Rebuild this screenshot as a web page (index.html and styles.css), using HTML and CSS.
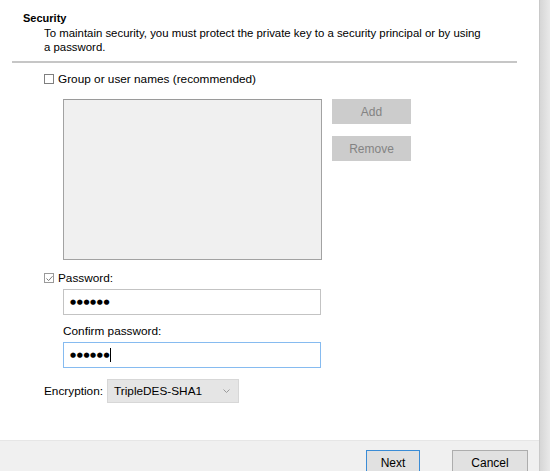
FILE: index.html
```html
<!DOCTYPE html>
<html lang="en">
  <head>
    <meta charset="UTF-8" />
    <title>Certificate Export Wizard - Security</title>
    <link rel="stylesheet" href="styles.css">
  </head>
  <body>
    <div class="page">
      <div class="wizard">
        <div class="header">
          <div class="title">Security</div>
          <div class="desc">To maintain security, you must protect the private key to a security principal or by using a password.</div>
        </div>
        <div class="separator"></div>

        <div class="content">
          <label class="check-row">
            <span class="box"></span>
            <span>Group or user names (recommended)</span>
          </label>

          <div class="principals">
            <div class="listbox"></div>
            <div class="side-buttons">
              <button class="btn disabled">Add</button>
              <button class="btn disabled">Remove</button>
            </div>
          </div>

          <label class="check-row pw-check">
            <span class="box checked">
              <svg width="7" height="7" viewBox="0 0 7 7"><path d="M0.5 3.5 L2.6 5.6 L6.5 1.2" fill="none" stroke="#7a7a7a" stroke-width="1"/></svg>
            </span>
            <span>Password:</span>
          </label>
          <div class="field"><span class="dots">&#9679;&#9679;&#9679;&#9679;&#9679;&#9679;</span></div>

          <div class="field-label">Confirm password:</div>
          <div class="field focused"><span class="dots">&#9679;&#9679;&#9679;&#9679;&#9679;&#9679;</span><span class="caret"></span></div>

          <div class="enc-row">
            <span class="enc-label">Encryption:</span>
            <div class="select">
              <span>TripleDES-SHA1</span>
              <svg width="7" height="4" viewBox="0 0 7 4"><path d="M0.5 0.5 L3.5 3.5 L6.5 0.5" fill="none" stroke="#9a9a9a" stroke-width="1"/></svg>
            </div>
          </div>
        </div>

        <div class="footer">
          <button class="btn next">Next</button>
          <button class="btn cancel">Cancel</button>
        </div>
      </div>
      <div class="edge"></div>
    </div>
  </body>
</html>
```

FILE: styles.css
```css
* {
  box-sizing: border-box;
}
body {
  margin: 0;
  font-family: "Liberation Sans", Arial, sans-serif;
  font-size: 11.8px;
  color: #000;
  background: #fff;
}
.page {
  display: flex;
  height: 471px;
  overflow: hidden;
}
.wizard {
  width: 540px;
  display: flex;
  flex-direction: column;
  background: #fff;
  border-right: 1px solid #c9c9c9;
}
.edge {
  flex: 1;
  background: linear-gradient(to right, #d6d6d6, #e9e9e9);
}

.header {
  padding: 11px 0 0 23px;
}
.title {
  font-weight: bold;
  font-size: 11px;
  line-height: 14px;
}
.desc {
  padding-left: 21px;
  width: 462px;
  font-size: 11.4px;
  line-height: 14px;
  margin-top: 1px;
}
.separator {
  margin: 7px 0 0 12px;
  width: 505px;
  height: 2px;
  background: #c6c6c6;
}

.content {
  flex: 1;
  padding-left: 44px;
}
.check-row {
  display: flex;
  align-items: center;
  gap: 4px;
  height: 14px;
  margin-top: 9px;
}
.box {
  width: 10px;
  height: 10px;
  border: 1px solid #7f7f7f;
  display: flex;
  align-items: center;
  justify-content: center;
}
.box.checked {
  border-color: #9a9a9a;
}

.principals {
  display: flex;
  gap: 10px;
  margin: 13px 0 0 19px;
}
.listbox {
  width: 259px;
  height: 161px;
  background: #f0f0f0;
  border: 1px solid #a2a2a2;
  border-top-color: #9a9a9a;
}
.side-buttons {
  display: flex;
  flex-direction: column;
  gap: 12px;
}
.btn {
  font-family: inherit;
  font-size: 12px;
  width: 79px;
  height: 25px;
  padding: 0;
  border: 1px solid #adadad;
  background: #e1e1e1;
  color: #000;
}
.btn.disabled {
  background: #cccccc;
  border-color: #cccccc;
  color: #838383;
}

.pw-check {
  margin-top: 11px;
}
.field {
  margin: 4px 0 0 19px;
  width: 258px;
  height: 26px;
  border: 1px solid #c3c3c3;
  display: flex;
  align-items: center;
  padding-left: 6px;
}
.field.focused {
  border-color: #86bbf0;
}
.dots {
  font-family: "DejaVu Sans", sans-serif;
  font-size: 7px;
  letter-spacing: 0.6px;
}
.caret {
  width: 1px;
  height: 14px;
  background: #000;
}
.field-label {
  margin: 9px 0 0 19px;
  line-height: 14px;
}

.enc-row {
  display: flex;
  align-items: center;
  margin-top: 11px;
}
.enc-label {
  width: 63px;
}
.select {
  width: 132px;
  height: 24px;
  background: #e5e5e5;
  border: 1px solid #d7d7d7;
  display: flex;
  align-items: center;
  justify-content: space-between;
  padding: 0 8px 0 6px;
}

.footer {
  height: 31px;
  background: #f0f0f0;
  border-top: 1px solid #e6e6e6;
  display: flex;
  justify-content: flex-end;
  align-items: flex-start;
  gap: 32px;
  padding: 9px 11px 0 0;
}
.btn.next {
  width: 54px;
  height: 26px;
  border-color: #3a8cd6;
}
.btn.cancel {
  width: 76px;
  height: 26px;
}
```
